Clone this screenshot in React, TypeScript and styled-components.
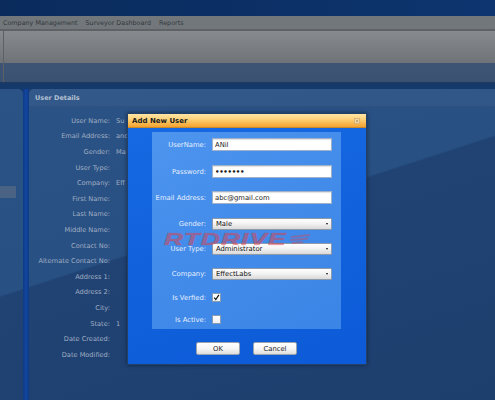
import React from "react";
import styled, { createGlobalStyle } from "styled-components";

const Global = createGlobalStyle`
  html, body { margin: 0; padding: 0; }
  body {
    width: 495px;
    height: 400px;
    overflow: hidden;
    background: #143a72;
    font-family: "DejaVu Sans", "Liberation Sans", sans-serif;
  }
`;

const Page = styled.div`
  position: relative;
  width: 495px;
  height: 400px;
  display: flex;
  flex-direction: column;
  overflow: hidden;
`;

const TopBand = styled.div`
  flex: none;
  height: 16px;
  background: linear-gradient(90deg, #0a2b5c, #0c3168 60%, #0e356f);
`;

const MenuBar = styled.nav`
  flex: none;
  height: 13px;
  background: #72777b;
  border-bottom: 2px solid #5e6265;
  display: flex;
  align-items: center;
  gap: 8px;
  padding-left: 3px;
`;

const MenuItem = styled.span`
  font-size: 6.4px;
  color: #34383c;
  white-space: nowrap;
`;

const Toolbar = styled.div`
  flex: none;
  height: 32px;
  display: flex;
  background: linear-gradient(#878b8f, #6f7377);
`;

const ToolStrip = styled.div`
  flex: none;
  height: 19px;
  display: flex;
  background: linear-gradient(#3e5474, #3a5272);
  border-bottom: 1px solid #24385a;
`;

const ToolEdge = styled.div`
  width: 3px;
  border-right: 1px solid #5b6166;
`;

const Main = styled.main`
  flex: 1;
  display: flex;
  padding-top: 6px;
  background: #16396c;
`;

const panelBg = `
  background: linear-gradient(162deg, #2c5487 0px, #285083 281px, #204374 283px, #1d3f6e 100%);
  background-attachment: fixed;
`;

const LeftPanel = styled.aside`
  width: 23px;
  border-top-right-radius: 5px;
  ${panelBg}
  display: flex;
  flex-direction: column;
  padding-top: 97px;
  box-sizing: border-box;
`;

const NavHighlight = styled.div`
  width: 16px;
  height: 12px;
  background: #4a6384;
`;

const Divider = styled.div`
  width: 6px;
  background: linear-gradient(90deg, #0c3a86, #1346a0 50%, #0c3a86);
`;

const DetailsPanel = styled.section`
  flex: 1;
  border-top-left-radius: 5px;
  ${panelBg}
  display: flex;
  flex-direction: column;
`;

const PanelHeader = styled.header`
  height: 17px;
  display: flex;
  align-items: center;
  padding-left: 6px;
  background: rgba(255, 255, 255, 0.04);
  border-bottom: 1px solid rgba(0, 0, 0, 0.08);
  font-size: 6.5px;
  font-weight: bold;
  color: #b4c0d0;
`;

const DetailsGrid = styled.dl`
  margin: 0;
  padding-top: 6px;
  display: grid;
  grid-template-columns: 81px 1fr;
  grid-auto-rows: 15.6px;
  column-gap: 6px;
  align-items: center;
`;

const DetailLabel = styled.dt`
  text-align: right;
  font-size: 6.6px;
  color: #a0aec2;
  white-space: nowrap;
`;

const DetailValue = styled.dd`
  margin: 0;
  font-size: 6.6px;
  color: #a0aec2;
  white-space: nowrap;
`;

/* ---------- dialog ---------- */

const Dialog = styled.div`
  position: absolute;
  left: 127px;
  top: 113px;
  width: 240px;
  height: 252px;
  box-sizing: border-box;
  border: 1px solid #23406a;
  box-shadow: 0 0 4px rgba(0, 0, 0, 0.45);
  display: flex;
  flex-direction: column;
  background: linear-gradient(165deg, #176ae3 0%, #1262dd 45%, #0c5ad7 100%);
`;

const TitleBar = styled.div`
  flex: none;
  height: 13px;
  display: flex;
  align-items: center;
  justify-content: space-between;
  padding: 0 6px 0 4px;
  background: linear-gradient(#ffe6a6 0%, #fdd27a 40%, #f8b54a 75%, #f2a232 100%);
  border-bottom: 1px solid #c98a2c;
`;

const Title = styled.span`
  font-size: 7px;
  font-weight: bold;
  color: #1c1c1c;
`;

const CloseBox = styled.svg`
  width: 6px;
  height: 6px;
`;

const DialogBody = styled.div`
  flex: 1;
  display: flex;
  flex-direction: column;
  align-items: center;
  padding: 4px 25px 0 24px;
`;

const FormPanel = styled.div`
  align-self: stretch;
  height: 197px;
  box-sizing: border-box;
  padding: 0 8px 0 0;
  display: flex;
  flex-direction: column;
  background: linear-gradient(150deg, #4d95ee 0%, #438cea 45%, #3b85e6 100%);
`;

const FormRow = styled.div<{ $mt: number; $h: number }>`
  display: flex;
  align-items: center;
  gap: 6px;
  height: ${(p) => p.$h}px;
  margin-top: ${(p) => p.$mt}px;
`;

const FormLabel = styled.label`
  width: 54px;
  flex: none;
  text-align: right;
  font-size: 6.8px;
  color: #e6efff;
  white-space: nowrap;
`;

const TextInput = styled.input`
  width: 120px;
  height: 13px;
  box-sizing: border-box;
  border: 1px solid #9fb2c9;
  box-shadow: inset 0 1px 1px rgba(0, 0, 0, 0.12);
  background: #fff;
  padding: 0 2px;
  margin: 0;
  font-family: "DejaVu Sans", sans-serif;
  font-size: 6.8px;
  color: #1a1a1a;
  outline: none;
  &[type="password"] {
    font-weight: bold;
    font-size: 7px;
    letter-spacing: -0.3px;
  }
`;

const SelectBox = styled.div`
  position: relative;
  width: 120px;
  height: 12px;
  box-sizing: border-box;
  border: 1px solid #8d9aab;
  border-radius: 1px;
  background: linear-gradient(#ffffff 0%, #f3f3f3 45%, #d9d9d9 100%);
  display: flex;
  align-items: center;
  padding-left: 3px;
  font-size: 6.8px;
  color: #111;
  &::after {
    content: "";
    position: absolute;
    right: 3px;
    top: 4px;
    border-left: 1.5px solid transparent;
    border-right: 1.5px solid transparent;
    border-top: 2px solid #111;
  }
`;

const CheckBox = styled.span`
  width: 9px;
  height: 9px;
  box-sizing: border-box;
  border: 1px solid #8b9bb0;
  background: linear-gradient(#ffffff, #eef1f5);
  display: flex;
  align-items: center;
  justify-content: center;
`;

const ButtonRow = styled.div`
  display: flex;
  gap: 13px;
  margin-top: 13px;
`;

const Button = styled.button`
  width: 44px;
  height: 13px;
  box-sizing: border-box;
  padding: 0;
  border: 1px solid #9aa2ab;
  border-radius: 2px;
  background: linear-gradient(#ffffff 0%, #f6f6f6 50%, #dedede 100%);
  font-family: "DejaVu Sans", sans-serif;
  font-size: 6.8px;
  color: #222;
`;

const Watermark = styled.div`
  position: absolute;
  left: 36px;
  top: 117px;
  display: flex;
  align-items: center;
  pointer-events: none;
`;

const WatermarkText = styled.span`
  display: inline-block;
  font-family: "Liberation Sans", sans-serif;
  font-size: 17px;
  font-weight: 900;
  font-style: italic;
  letter-spacing: 0.7px;
  color: rgba(222, 70, 82, 0.5);
  -webkit-text-stroke: 0.6px rgba(200, 50, 60, 0.35);
  transform: scaleX(1.55);
  transform-origin: left center;
  line-height: 17px;
`;

const Swoosh = styled.svg`
  width: 22px;
  height: 12px;
  margin-left: 46px;
`;

const details: [string, string][] = [
  ["User Name:", "Su"],
  ["Email Address:", "and"],
  ["Gender:", "Ma"],
  ["User Type:", ""],
  ["Company:", "Eff"],
  ["First Name:", ""],
  ["Last Name:", ""],
  ["Middle Name:", ""],
  ["Contact No:", ""],
  ["Alternate Contact No:", ""],
  ["Address 1:", ""],
  ["Address 2:", ""],
  ["City:", ""],
  ["State:", "1"],
  ["Date Created:", ""],
  ["Date Modified:", ""],
];

export default function App() {
  return (
    <Page>
      <Global />
      <TopBand />
      <MenuBar>
        <MenuItem>Company Management</MenuItem>
        <MenuItem>Surveyor Dashboard</MenuItem>
        <MenuItem>Reports</MenuItem>
      </MenuBar>
      <Toolbar>
        <ToolEdge />
      </Toolbar>
      <ToolStrip>
        <ToolEdge />
      </ToolStrip>
      <Main>
        <LeftPanel>
          <NavHighlight />
        </LeftPanel>
        <Divider />
        <DetailsPanel>
          <PanelHeader>User Details</PanelHeader>
          <DetailsGrid>
            {details.map(([l, v]) => (
              <React.Fragment key={l}>
                <DetailLabel>{l}</DetailLabel>
                <DetailValue>{v}</DetailValue>
              </React.Fragment>
            ))}
          </DetailsGrid>
        </DetailsPanel>
      </Main>

      <Dialog>
        <TitleBar>
          <Title>Add New User</Title>
          <CloseBox viewBox="0 0 6 6">
            <rect x="0.5" y="0.5" width="5" height="5" fill="#f3d9a6" stroke="#c9a56a" strokeWidth="0.6" />
            <path d="M1.8 1.8 L4.2 4.2 M4.2 1.8 L1.8 4.2" stroke="#a88450" strokeWidth="0.6" />
          </CloseBox>
        </TitleBar>
        <DialogBody>
          <FormPanel>
            <FormRow $mt={6} $h={13}>
              <FormLabel>UserName:</FormLabel>
              <TextInput readOnly value="ANil" />
            </FormRow>
            <FormRow $mt={14} $h={13}>
              <FormLabel>Password:</FormLabel>
              <TextInput readOnly type="password" value="1234567" />
            </FormRow>
            <FormRow $mt={13} $h={13}>
              <FormLabel>Email Address:</FormLabel>
              <TextInput readOnly value="abc@gmail.com" />
            </FormRow>
            <FormRow $mt={14} $h={12}>
              <FormLabel>Gender:</FormLabel>
              <SelectBox>Male</SelectBox>
            </FormRow>
            <FormRow $mt={13} $h={12}>
              <FormLabel>User Type:</FormLabel>
              <SelectBox>Administrator</SelectBox>
            </FormRow>
            <FormRow $mt={13} $h={12}>
              <FormLabel>Company:</FormLabel>
              <SelectBox>EffectLabs</SelectBox>
            </FormRow>
            <FormRow $mt={13} $h={9}>
              <FormLabel>Is Verfied:</FormLabel>
              <CheckBox>
                <svg width="7" height="7" viewBox="0 0 7 7">
                  <path d="M1.2 3.6 L2.8 5.6 L5.9 0.9" fill="none" stroke="#111" strokeWidth="1.2" />
                </svg>
              </CheckBox>
            </FormRow>
            <FormRow $mt={13} $h={9}>
              <FormLabel>Is Active:</FormLabel>
              <CheckBox />
            </FormRow>
          </FormPanel>
          <ButtonRow>
            <Button>OK</Button>
            <Button>Cancel</Button>
          </ButtonRow>
        </DialogBody>
        <Watermark>
          <WatermarkText>RTDRIVE</WatermarkText>
          <Swoosh viewBox="0 0 22 12">
            <path d="M2 3 L21 1 M1 6 L19 4.5 M3 9 L14 8" stroke="rgba(215,70,80,0.4)" strokeWidth="2" fill="none" />
          </Swoosh>
        </Watermark>
      </Dialog>
    </Page>
  );
}
